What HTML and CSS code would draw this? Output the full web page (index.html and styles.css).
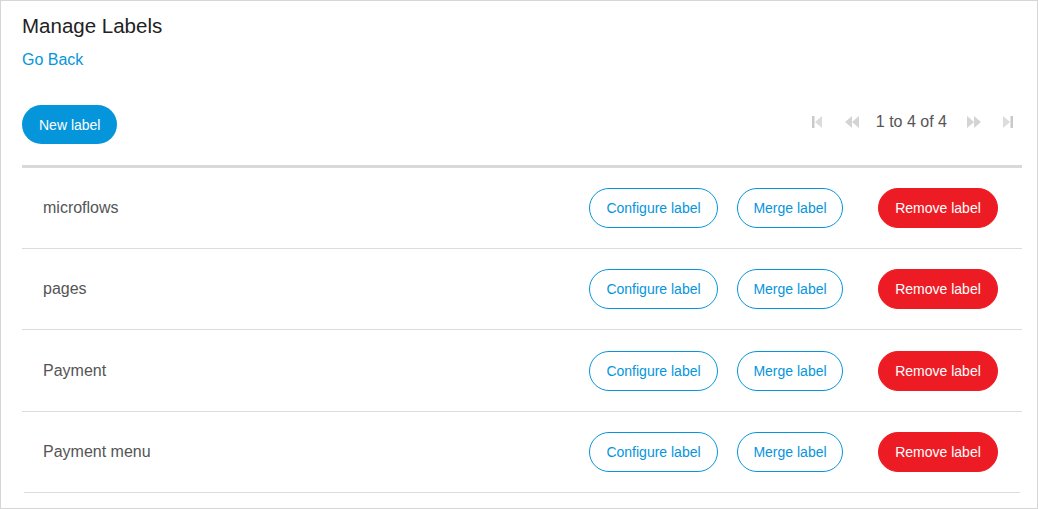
FILE: index.html
```html
<!DOCTYPE html>
<html>
<head>
<meta charset="utf-8">
<link rel="stylesheet" href="styles.css">
</head>
<body>
<div class="frame">
  <h1 class="title">Manage Labels</h1>
  <a class="back" href="#">Go Back</a>
  <div class="toolbar">
    <button class="btn-primary">New label</button>
    <div class="pager">
      <svg class="pg-icon" width="10" height="12" viewBox="0 0 10 12"><rect x="0" y="0" width="2.5" height="12" fill="#c9c9c9"/><path d="M10 0 L3 6 L10 12 Z" fill="#dcdcdc"/></svg>
      <svg class="pg-icon" width="14" height="12" viewBox="0 0 14 12"><path d="M7 0 L0 6 L7 12 Z M14 0 L7 6 L14 12 Z" fill="#d4d4d4"/></svg>
      <span class="pg-text">1 to 4 of 4</span>
      <svg class="pg-icon" width="14" height="12" viewBox="0 0 14 12"><path d="M0 0 L7 6 L0 12 Z M7 0 L14 6 L7 12 Z" fill="#d4d4d4"/></svg>
      <svg class="pg-icon" width="10" height="12" viewBox="0 0 10 12"><path d="M0 0 L7 6 L0 12 Z" fill="#dcdcdc"/><rect x="7.5" y="0" width="2.5" height="12" fill="#c9c9c9"/></svg>
    </div>
  </div>
  <div class="table">
    <div class="row">
      <span class="name">microflows</span>
      <div class="actions">
        <button class="btn-outline btn-configure">Configure label</button>
        <button class="btn-outline btn-merge">Merge label</button>
        <button class="btn-danger">Remove label</button>
      </div>
    </div>
    <div class="row">
      <span class="name">pages</span>
      <div class="actions">
        <button class="btn-outline btn-configure">Configure label</button>
        <button class="btn-outline btn-merge">Merge label</button>
        <button class="btn-danger">Remove label</button>
      </div>
    </div>
    <div class="row row-tall">
      <span class="name">Payment</span>
      <div class="actions">
        <button class="btn-outline btn-configure">Configure label</button>
        <button class="btn-outline btn-merge">Merge label</button>
        <button class="btn-danger">Remove label</button>
      </div>
    </div>
    <div class="row">
      <span class="name">Payment menu</span>
      <div class="actions">
        <button class="btn-outline btn-configure">Configure label</button>
        <button class="btn-outline btn-merge">Merge label</button>
        <button class="btn-danger">Remove label</button>
      </div>
    </div>
  </div>
</div>
</body>
</html>
```
FILE: styles.css
```css
html, body {
  margin: 0;
  padding: 0;
  background: #fff;
}
body {
  font-family: "Liberation Sans", Arial, sans-serif;
}
.frame {
  box-sizing: border-box;
  width: 1038px;
  height: 509px;
  border: 1px solid #d6d6d6;
  padding: 0 15px 0 21px;
  display: flex;
  flex-direction: column;
  align-items: flex-start;
}
.title {
  margin: 12px 0 0 0;
  font-size: 20.5px;
  font-weight: normal;
  line-height: 26px;
  color: #222;
}
.back {
  margin-top: 11px;
  font-size: 16px;
  line-height: 20px;
  color: #0595db;
  text-decoration: none;
}
.toolbar {
  align-self: stretch;
  margin-top: 35px;
  display: flex;
  justify-content: space-between;
  align-items: center;
  padding-bottom: 21px;
  border-bottom: 3px solid #d9d9d9;
}
.btn-primary {
  height: 39px;
  padding: 0 17px;
  border: none;
  border-radius: 20px;
  background: #0595db;
  color: #fff;
  font-family: inherit;
  font-size: 14px;
}
.pager {
  display: flex;
  align-items: center;
  margin-top: -5px;
  padding-right: 9px;
}
.pg-icon {
  display: block;
}
.pager .pg-icon:nth-child(1) { margin-right: 23px; }
.pager .pg-icon:nth-child(2) { margin-right: 17px; }
.pg-text {
  font-size: 16px;
  color: #555;
  margin-right: 20px;
}
.pager .pg-icon:nth-child(4) { margin-right: 22px; }
.table {
  align-self: stretch;
}
.row {
  display: flex;
  align-items: center;
  justify-content: space-between;
  height: 80px;
  padding: 0 24px 0 21px;
  border-bottom: 1px solid #dcdcdc;
}
.row-tall {
  height: 81px;
}
.row:last-child {
  margin: 0 2px;
  padding: 0 22px 0 19px;
}
.name {
  font-size: 16px;
  color: #555;
}
.actions {
  display: flex;
  align-items: center;
}
.btn-outline, .btn-danger {
  height: 40px;
  border-radius: 20px;
  font-family: inherit;
  font-size: 14px;
  padding: 0;
}
.btn-outline {
  border: 1px solid #0595db;
  background: #fff;
  color: #0595db;
}
.btn-configure {
  width: 129px;
  margin-right: 19px;
}
.btn-merge {
  width: 106px;
  margin-right: 35px;
}
.btn-danger {
  width: 120px;
  border: 1px solid #ed1c24;
  background: #ed1c24;
  color: #fff;
}
```
